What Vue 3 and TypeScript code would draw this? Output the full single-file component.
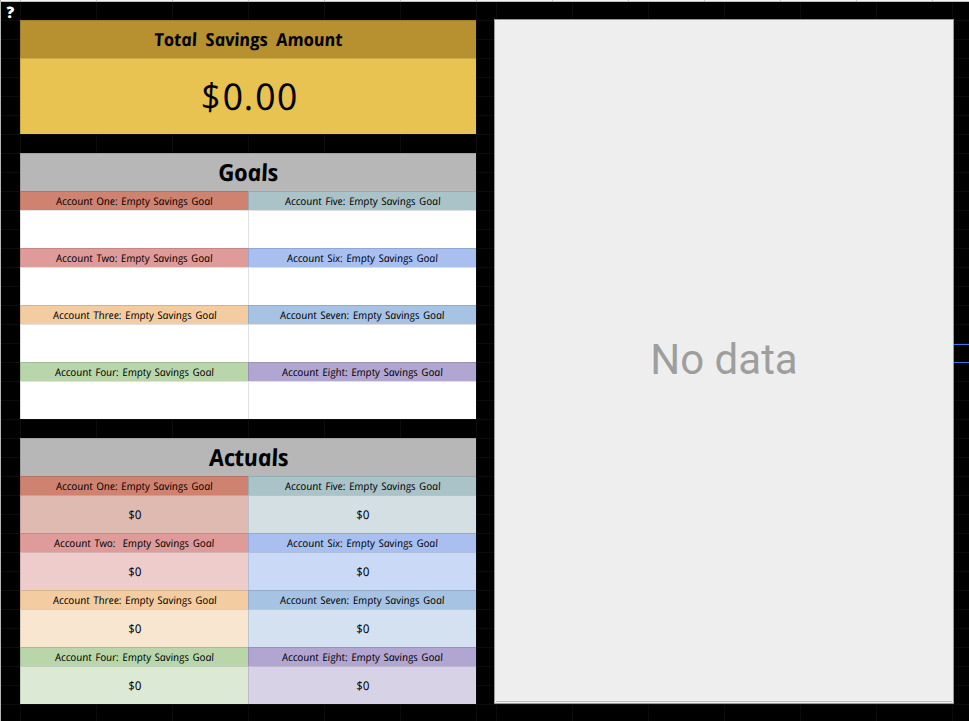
<script setup lang="ts">
interface Account {
  name: string
  tone: string
  goalLabel: string
  actualLabel: string
  amount: string
}

const account = (name: string, gap = ' '): Account => ({
  name,
  tone: name.toLowerCase(),
  goalLabel: `Account ${name}: Empty Savings Goal`,
  actualLabel: `Account ${name}:${gap}Empty Savings Goal`,
  amount: '$0',
})

const accounts: Account[] = [
  account('One'),
  account('Five'),
  account('Two', '  '),
  account('Six'),
  account('Three'),
  account('Seven'),
  account('Four'),
  account('Eight'),
]
</script>

<template>
  <main class="sheet">
    <div class="gutter"><span class="hand help">?</span></div>
    <div class="tables">
      <section class="total">
        <h1 class="cell"><span class="hand">Total Savings Amount</span></h1>
        <div class="cell sum"><span class="hand">$0.00</span></div>
      </section>

      <section class="block">
        <h2 class="cell"><span class="hand">Goals</span></h2>
        <div class="accounts">
          <div v-for="a in accounts" :key="a.name" :class="a.tone">
            <div class="cell label"><span class="hand">{{ a.goalLabel }}</span></div>
            <div class="cell blank"></div>
          </div>
        </div>
      </section>

      <section class="block">
        <h2 class="cell"><span class="hand">Actuals</span></h2>
        <div class="accounts">
          <div v-for="a in accounts" :key="a.name" :class="a.tone">
            <div class="cell label"><span class="hand">{{ a.actualLabel }}</span></div>
            <div class="cell value"><span class="hand">{{ a.amount }}</span></div>
          </div>
        </div>
      </section>
    </div>

    <div class="chart">
      <span>No data</span>
      <div class="chart-edge"></div>
    </div>
    <div class="selection"></div>
  </main>
</template>

<style>
body {
  margin: 0;
  overflow: hidden;
}
</style>

<style scoped>
.sheet {
  box-sizing: border-box;
  width: 969px;
  height: 721px;
  display: flex;
  align-items: flex-start;
  overflow: hidden;
  color: #000;
  background:
    linear-gradient(#b7b7b7, #b7b7b7) 0 0 / 1px 100% no-repeat,
    linear-gradient(#c0c0c0, #c0c0c0) 0 1px / 100% 1px no-repeat,
    repeating-linear-gradient(to right, #c0c0c0 0 1px, #f5f5f5 1px 76px) 20px 0 / 949px 1px no-repeat,
    linear-gradient(#f5f5f5, #f5f5f5) 0 0 / 20px 1px no-repeat,
    repeating-linear-gradient(to right, #0c0c0c 0 1px, transparent 1px 76px) 20px 2px / 457px 719px no-repeat,
    repeating-linear-gradient(to right, #0c0c0c 0 1px, transparent 1px 76px) 496px 2px / 473px 719px no-repeat,
    repeating-linear-gradient(to bottom, #0c0c0c 0 1px, transparent 1px 19px) 0 20px / 100% 701px no-repeat,
    #000;
}
.gutter {
  width: 20px;
  height: 20px;
  display: flex;
  flex: none;
}
.hand {
  display: inline-block;
  font-family: "Open Sans", sans-serif;
  font-style: italic;
  transform: skewX(9deg);
  white-space: pre;
  line-height: 1;
}
.help {
  margin: 4px 0 0 6px;
  color: #fff;
  font-size: 16px;
  font-weight: 800;
}
.tables {
  width: 456px;
  margin-top: 20px;
  display: flex;
  flex: none;
  flex-direction: column;
  gap: 19px;
}
.cell {
  box-sizing: border-box;
  margin: 0;
  height: 38px;
  display: flex;
  align-items: center;
  justify-content: center;
  border-top: 1px solid rgba(0, 0, 0, 0.12);
  border-left: 1px solid rgba(0, 0, 0, 0.12);
}
h1.cell {
  padding-bottom: 1px;
  background: #b79130;
  font-size: 18px;
  font-weight: 700;
  letter-spacing: -0.2px;
  word-spacing: 4px;
}
.sum {
  height: 76px;
  padding-bottom: 3px;
  background: #e8c351;
  font-size: 37px;
  letter-spacing: 1.4px;
}
h2.cell {
  padding-top: 1px;
  background: #b7b7b7;
  font-size: 23.5px;
  font-weight: 700;
  letter-spacing: -0.4px;
}
.accounts {
  display: grid;
  grid-template-columns: 1fr 1fr;
}
.cell.label {
  height: 19px;
  background: var(--tone);
  font-size: 10.5px;
  letter-spacing: -0.05px;
  word-spacing: 0.9px;
}
.blank {
  background: #fff;
}
.value {
  background: var(--tint);
  font-size: 12px;
}
.one { --tone: #d08271; --tint: #dfbab1; }
.two { --tone: #df9b99; --tint: #edcccb; }
.three { --tone: #f3cca1; --tint: #f8e6d1; }
.four { --tone: #b9d6aa; --tint: #dce9d5; }
.five { --tone: #a9c3c8; --tint: #d3dfe2; }
.six { --tone: #a9bff0; --tint: #cad9f5; }
.seven { --tone: #a6c3e4; --tint: #d3e1f0; }
.eight { --tone: #b1a5d2; --tint: #d8d2e7; }
.chart {
  box-sizing: border-box;
  width: 460px;
  height: 685px;
  margin: 19px 0 0 18px;
  padding: 0 1px 1px;
  display: flex;
  flex: none;
  flex-direction: column;
  align-items: center;
  border: 1px solid #999;
  background: #eee;
  color: #9e9e9e;
  font: 42px/1 Roboto, sans-serif;
}
.chart span {
  flex: 1;
  display: flex;
  align-items: center;
  padding-bottom: 2px;
}
.chart-edge {
  align-self: stretch;
  height: 1px;
  background: #bdbdbd;
}
.selection {
  flex: 1;
  height: 17px;
  margin-top: 344px;
  border-top: 1px solid #3b78e7;
  border-bottom: 1px solid #3b78e7;
}
</style>
